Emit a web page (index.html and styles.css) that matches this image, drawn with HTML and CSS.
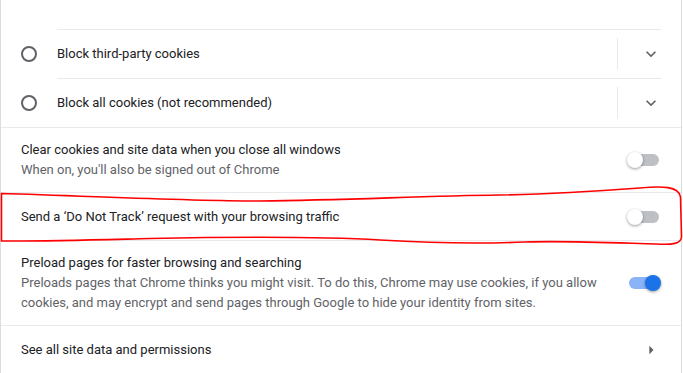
FILE: index.html
```html
<!DOCTYPE html>
<html lang="en">
<head>
    <meta charset="UTF-8">
    <meta name="viewport" content="width=device-width, initial-scale=1.0">
    <title>Cookies and site data</title>
    <link rel="stylesheet" href="styles.css">
</head>
<body>

    <div class="card">
        <!-- Cookie options (radio list) -->
        <div class="radio-group">
            <div class="radio-item">
                <span class="radio"></span>
                <div class="radio-body">
                    <span class="label">Block third-party cookies</span>
                    <span class="divider"></span>
                    <svg class="icon" viewBox="0 0 24 24"><path d="M16.59 8.59L12 13.17 7.41 8.59 6 10l6 6 6-6z"/></svg>
                </div>
            </div>
            <div class="radio-item">
                <span class="radio"></span>
                <div class="radio-body">
                    <span class="label">Block all cookies (not recommended)</span>
                    <span class="divider"></span>
                    <svg class="icon" viewBox="0 0 24 24"><path d="M16.59 8.59L12 13.17 7.41 8.59 6 10l6 6 6-6z"/></svg>
                </div>
            </div>
        </div>

        <!-- Toggle rows -->
        <div class="row tall">
            <div class="text">
                <div class="label">Clear cookies and site data when you close all windows</div>
                <div class="secondary">When on, you'll also be signed out of Chrome</div>
            </div>
            <span class="toggle"><span class="knob"></span></span>
        </div>

        <div class="row">
            <div class="text">
                <div class="label">Send a ‘Do Not Track’ request with your browsing traffic</div>
            </div>
            <span class="toggle"><span class="knob"></span></span>
        </div>

        <div class="row tall">
            <div class="text">
                <div class="label">Preload pages for faster browsing and searching</div>
                <div class="secondary">Preloads pages that Chrome thinks you might visit. To do this, Chrome may use cookies, if you allow cookies, and may encrypt and send pages through Google to hide your identity from sites.</div>
            </div>
            <span class="toggle on"><span class="knob"></span></span>
        </div>

        <div class="row">
            <div class="text">
                <div class="label">See all site data and permissions</div>
            </div>
            <svg class="icon" viewBox="0 0 24 24"><path d="M10 17l5-5-5-5v10z"/></svg>
        </div>
    </div>

    <!-- Hand-drawn highlight over the Do Not Track row -->
    <svg class="highlight" viewBox="0 0 683 373">
        <path d="M1.5 193.5 C 90 196, 190 201, 260 201 C 350 200, 420 196, 500 195 C 560 194, 600 191, 640 188 C 662 186, 679 186, 680.5 197 L 681.5 236 C 682 244, 672 245, 656 244 C 620 243, 565 240.5, 525 242 C 480 244, 430 243, 380 240 C 330 237, 250 236.5, 150 238.5 C 90 240, 40 241.5, 1.5 241 Z"/>
    </svg>

</body>
</html>
```

FILE: styles.css
```css
/* General Styles */
body {
    margin: 0;
    background: #fff;
    font-family: Roboto, "Liberation Sans", Arial, sans-serif;
    font-size: 13px;
    color: #202124;
    position: relative;
}

/* Card */
.card {
    width: 680px;
    border-left: 1px solid #dadce0;
    border-right: 1px solid #dadce0;
}

.label {
    line-height: 20px;
}

.secondary {
    color: #5f6368;
    line-height: 20px;
}

.icon {
    width: 20px;
    height: 20px;
    fill: #5f6368;
    flex-shrink: 0;
}

/* Radio list */
.radio-group {
    padding: 29px 20px 0 20px;
}

.radio-item {
    display: flex;
    align-items: center;
}

.radio {
    width: 12px;
    height: 12px;
    border: 2px solid #5f6368;
    border-radius: 50%;
    margin-right: 20px;
    flex-shrink: 0;
}

.radio-body {
    flex: 1;
    display: flex;
    align-items: center;
    height: 48px;
    border-top: 1px solid #e8eaed;
}

.radio-body .label {
    flex: 1;
}

.divider {
    width: 1px;
    height: 32px;
    background: #e8eaed;
    margin-right: 23px;
}

/* Rows */
.row {
    display: flex;
    align-items: center;
    min-height: 48px;
    padding: 0 20px;
    border-top: 1px solid #e8eaed;
    box-sizing: border-box;
}

.row.tall {
    padding-top: 12px;
    padding-bottom: 12px;
    min-height: 64px;
}

.row .text {
    flex: 1;
    padding-right: 20px;
}

/* Toggle */
.toggle {
    position: relative;
    width: 34px;
    height: 16px;
    flex-shrink: 0;
}

.toggle::before {
    content: "";
    position: absolute;
    left: 2px;
    right: 2px;
    top: 2px;
    height: 12px;
    border-radius: 6px;
    background: #bdc1c6;
}

.knob {
    position: absolute;
    left: 0;
    top: 0;
    width: 16px;
    height: 16px;
    border-radius: 50%;
    background: #fff;
    box-shadow: 0 1px 3px rgba(0, 0, 0, 0.4);
}

.toggle.on::before {
    background: #8ab4f8;
}

.toggle.on .knob {
    left: 18px;
    background: #1a73e8;
}

/* Red highlight */
.highlight {
    position: absolute;
    left: 0;
    top: 0;
    width: 683px;
    height: 373px;
    pointer-events: none;
    fill: none;
    stroke: #ff0000;
    stroke-width: 1.6;
}
```
